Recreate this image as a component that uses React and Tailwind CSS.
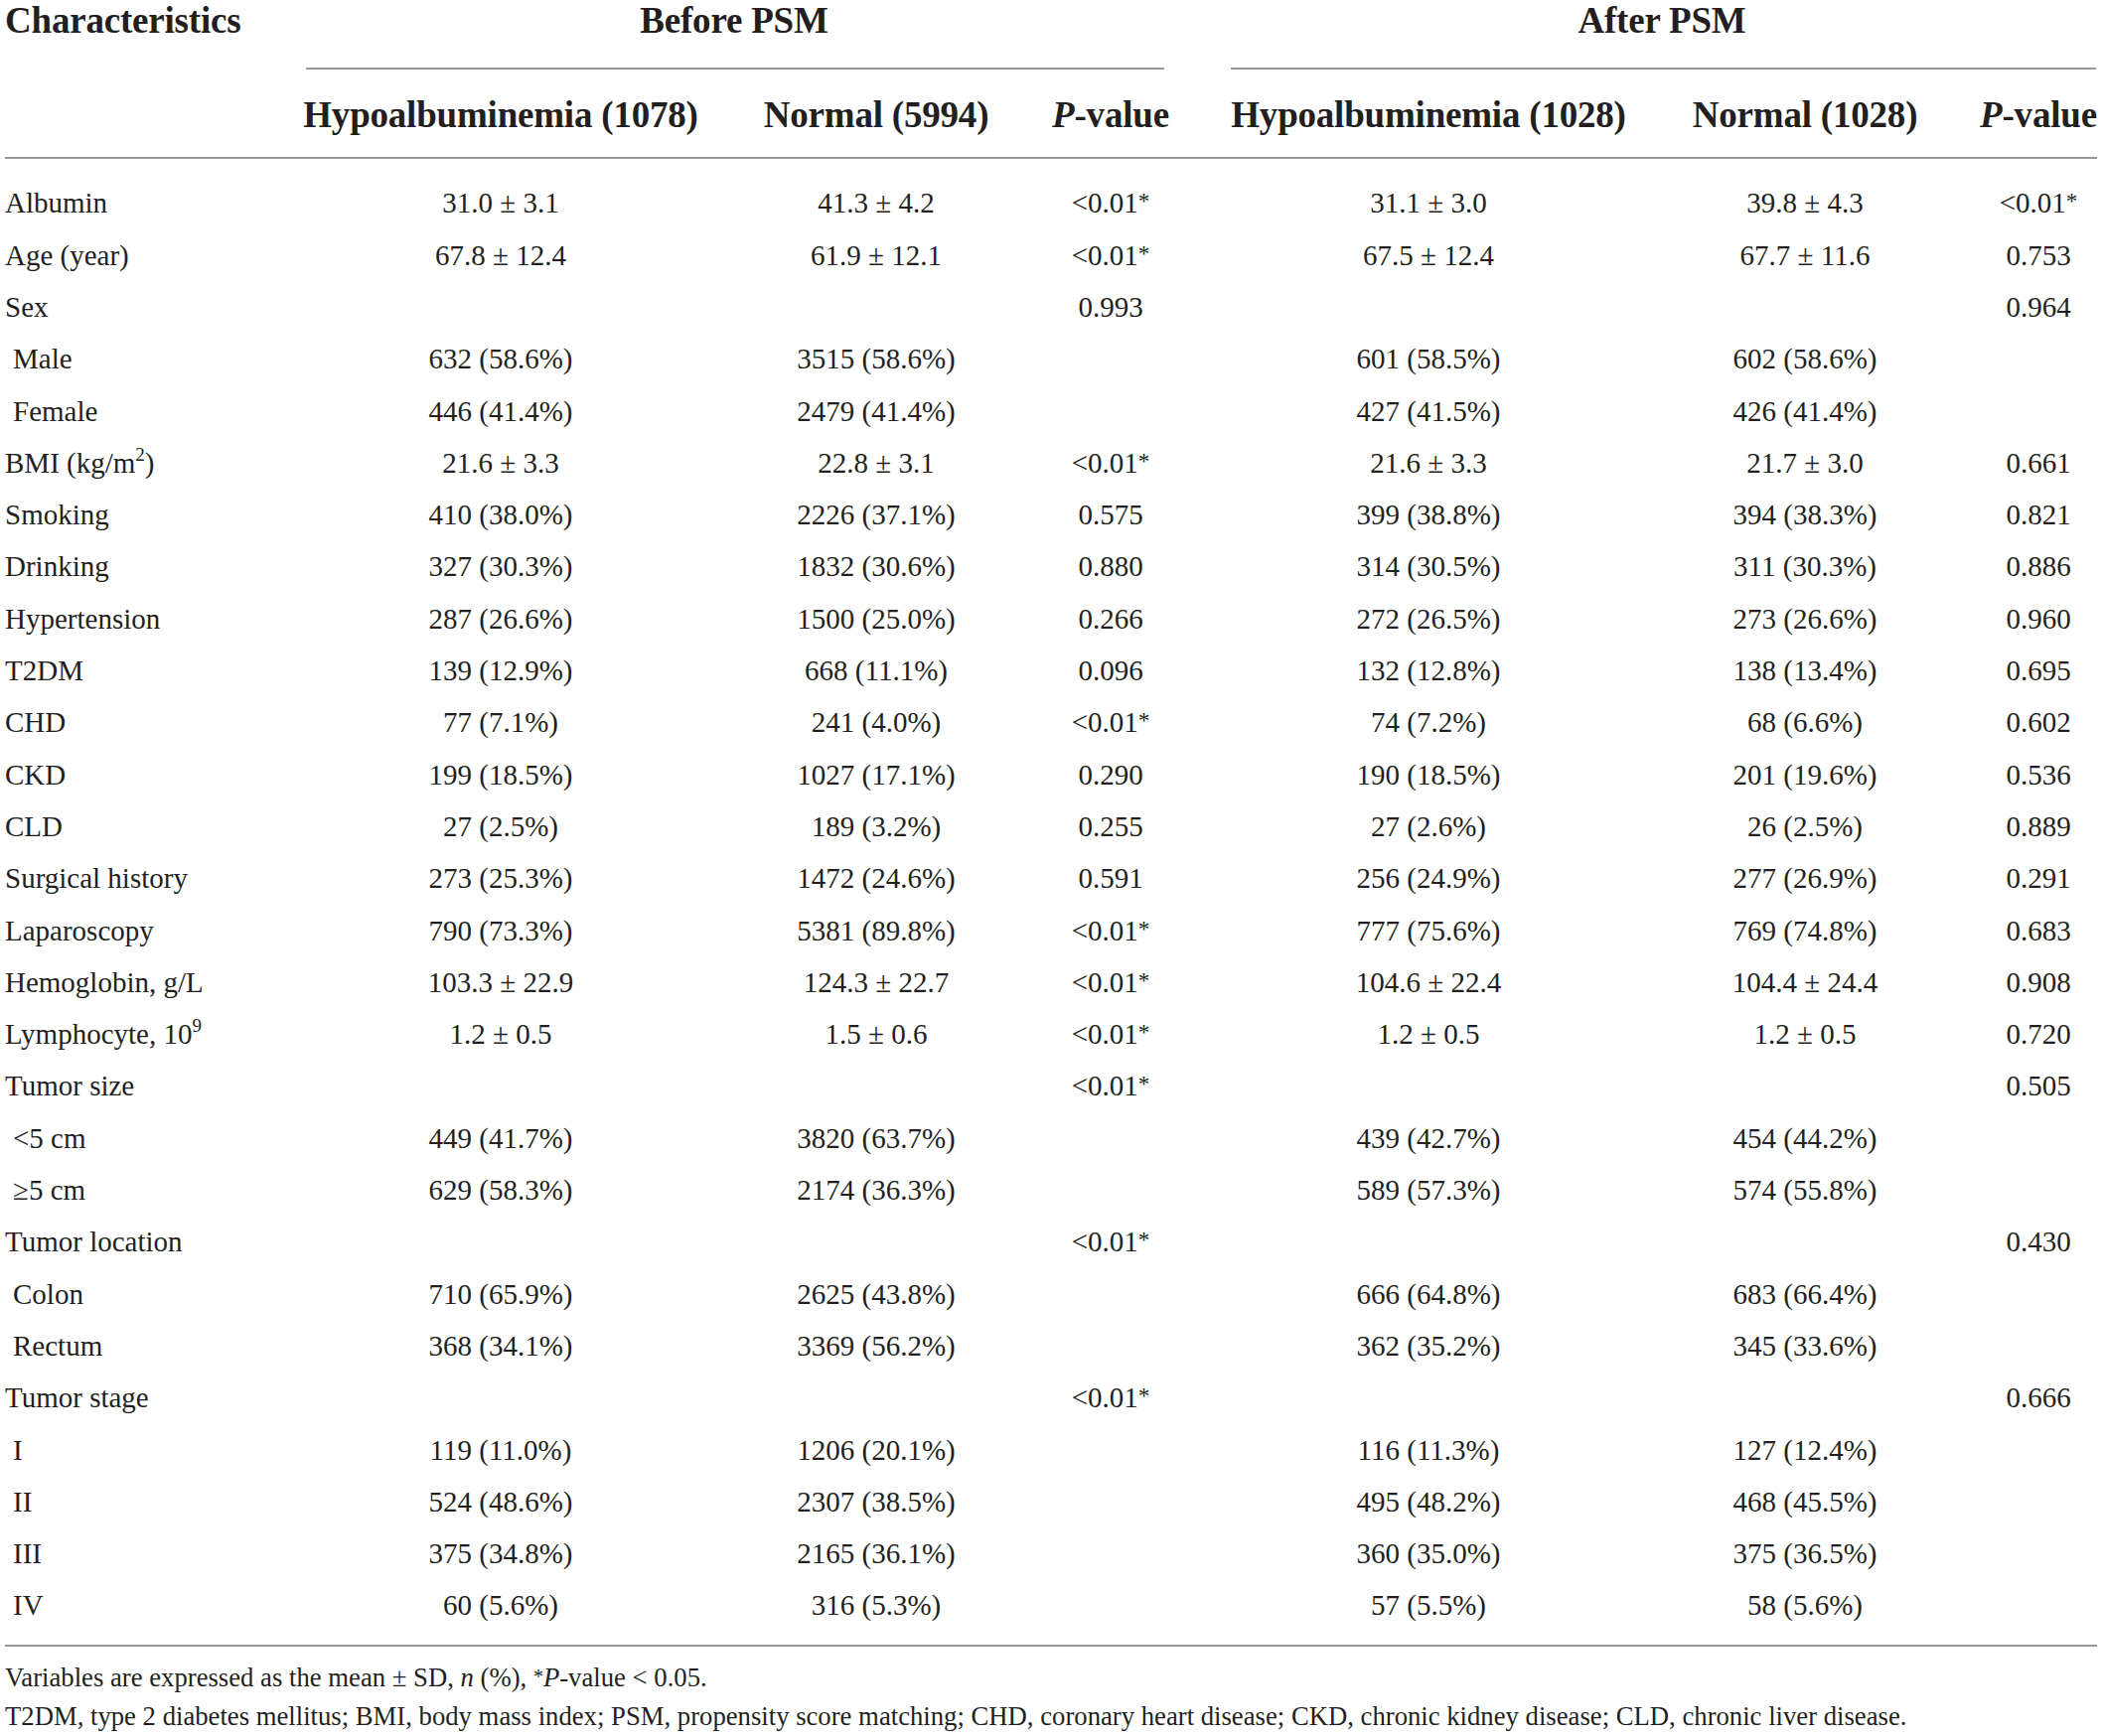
import React from "react";

const rows = [
  ["Albumin", "31.0 ± 3.1", "41.3 ± 4.2", "<0.01*", "31.1 ± 3.0", "39.8 ± 4.3", "<0.01*"],
  ["Age (year)", "67.8 ± 12.4", "61.9 ± 12.1", "<0.01*", "67.5 ± 12.4", "67.7 ± 11.6", "0.753"],
  ["Sex", "", "", "0.993", "", "", "0.964"],
  ["Male", "632 (58.6%)", "3515 (58.6%)", "", "601 (58.5%)", "602 (58.6%)", "", true],
  ["Female", "446 (41.4%)", "2479 (41.4%)", "", "427 (41.5%)", "426 (41.4%)", "", true],
  ["BMI", "21.6 ± 3.3", "22.8 ± 3.1", "<0.01*", "21.6 ± 3.3", "21.7 ± 3.0", "0.661"],
  ["Smoking", "410 (38.0%)", "2226 (37.1%)", "0.575", "399 (38.8%)", "394 (38.3%)", "0.821"],
  ["Drinking", "327 (30.3%)", "1832 (30.6%)", "0.880", "314 (30.5%)", "311 (30.3%)", "0.886"],
  ["Hypertension", "287 (26.6%)", "1500 (25.0%)", "0.266", "272 (26.5%)", "273 (26.6%)", "0.960"],
  ["T2DM", "139 (12.9%)", "668 (11.1%)", "0.096", "132 (12.8%)", "138 (13.4%)", "0.695"],
  ["CHD", "77 (7.1%)", "241 (4.0%)", "<0.01*", "74 (7.2%)", "68 (6.6%)", "0.602"],
  ["CKD", "199 (18.5%)", "1027 (17.1%)", "0.290", "190 (18.5%)", "201 (19.6%)", "0.536"],
  ["CLD", "27 (2.5%)", "189 (3.2%)", "0.255", "27 (2.6%)", "26 (2.5%)", "0.889"],
  ["Surgical history", "273 (25.3%)", "1472 (24.6%)", "0.591", "256 (24.9%)", "277 (26.9%)", "0.291"],
  ["Laparoscopy", "790 (73.3%)", "5381 (89.8%)", "<0.01*", "777 (75.6%)", "769 (74.8%)", "0.683"],
  ["Hemoglobin, g/L", "103.3 ± 22.9", "124.3 ± 22.7", "<0.01*", "104.6 ± 22.4", "104.4 ± 24.4", "0.908"],
  ["Lymphocyte", "1.2 ± 0.5", "1.5 ± 0.6", "<0.01*", "1.2 ± 0.5", "1.2 ± 0.5", "0.720"],
  ["Tumor size", "", "", "<0.01*", "", "", "0.505"],
  ["<5 cm", "449 (41.7%)", "3820 (63.7%)", "", "439 (42.7%)", "454 (44.2%)", "", true],
  ["≥5 cm", "629 (58.3%)", "2174 (36.3%)", "", "589 (57.3%)", "574 (55.8%)", "", true],
  ["Tumor location", "", "", "<0.01*", "", "", "0.430"],
  ["Colon", "710 (65.9%)", "2625 (43.8%)", "", "666 (64.8%)", "683 (66.4%)", "", true],
  ["Rectum", "368 (34.1%)", "3369 (56.2%)", "", "362 (35.2%)", "345 (33.6%)", "", true],
  ["Tumor stage", "", "", "<0.01*", "", "", "0.666"],
  ["I", "119 (11.0%)", "1206 (20.1%)", "", "116 (11.3%)", "127 (12.4%)", "", true],
  ["II", "524 (48.6%)", "2307 (38.5%)", "", "495 (48.2%)", "468 (45.5%)", "", true],
  ["III", "375 (34.8%)", "2165 (36.1%)", "", "360 (35.0%)", "375 (36.5%)", "", true],
  ["IV", "60 (5.6%)", "316 (5.3%)", "", "57 (5.5%)", "58 (5.6%)", "", true],
];

function Label({ text }) {
  if (text === "BMI")
    return (
      <span>
        BMI (kg/m<sup className="text-[19px] top-[-12px]">2</sup>)
      </span>
    );
  if (text === "Lymphocyte")
    return (
      <span>
        Lymphocyte, 10<sup className="text-[19px] top-[-12px]">9</sup>
      </span>
    );
  return <span>{text}</span>;
}

function PVal({ v }) {
  if (v.endsWith("*")) {
    return (
      <span>
        {v.slice(0, -1)}
        <span className="relative top-[-4px] text-[23px]">*</span>
      </span>
    );
  }
  return <span>{v}</span>;
}

const cols = "grid grid-cols-[250px_508px_248px_224px_416px_342px_128px]";

export default function App() {
  return (
    <div
      className="w-[2117px] h-[1748px] bg-white text-[#231f20] overflow-hidden"
      style={{ fontFamily: '"Liberation Serif", "Times New Roman", serif' }}
    >
      {/* top header */}
      <div className={`${cols} font-bold text-[37px] leading-[42px] tracking-[-0.2px]`}>
        <div className="pl-[5px]">Characteristics</div>
        <div className="col-span-3 text-center pr-[2px]">Before PSM</div>
        <div className="col-span-3 text-center">After PSM</div>
      </div>
      <div className={`${cols} mt-[26px]`}>
        <div />
        <div className="col-span-3 h-[2px] bg-[#9a9a9a] ml-[58px] mr-[58px]" />
        <div className="col-span-3 h-[2px] bg-[#9a9a9a] ml-[9px] mr-[6px]" />
      </div>
      <div className={`${cols} mt-[24px] font-bold text-[37px] leading-[44px] tracking-[-0.2px] text-center`}>
        <div />
        <div>Hypoalbuminemia (1078)</div>
        <div>Normal (5994)</div>
        <div>
          <i>P</i>-value
        </div>
        <div>Hypoalbuminemia (1028)</div>
        <div>Normal (1028)</div>
        <div>
          <i>P</i>-value
        </div>
      </div>
      <div className="mt-[20px] h-[2px] bg-[#9a9a9a] ml-[5px] mr-[6px]" />
      <div className="pt-[19px] text-[29px]">
        {rows.map((r, i) => (
          <div key={i} className={`${cols} h-[52.3px] items-center`}>
            <div className={r[7] ? "pl-[13px]" : "pl-[5px]"}>
              <Label text={r[0]} />
            </div>
            {r.slice(1, 7).map((c, j) => (
              <div key={j} className="text-center">
                {j === 2 || j === 5 ? <PVal v={c} /> : c}
              </div>
            ))}
          </div>
        ))}
      </div>
      <div className="mt-[13px] h-[2px] bg-[#9a9a9a] ml-[5px] mr-[6px]" />
      <div className="mt-[13px] pl-[5px] text-[26.7px] leading-[37px]">
        <div>
          Variables are expressed as the mean ± SD, <i>n</i> (%),{" "}
          <span className="relative top-[-3px] text-[20px]">*</span>
          <i>P</i>-value &lt; 0.05.
        </div>
        <div>
          T2DM, type 2 diabetes mellitus; BMI, body mass index; PSM, propensity score matching; CHD,
          coronary heart disease; CKD, chronic kidney disease; CLD, chronic liver disease.
        </div>
      </div>
    </div>
  );
}
